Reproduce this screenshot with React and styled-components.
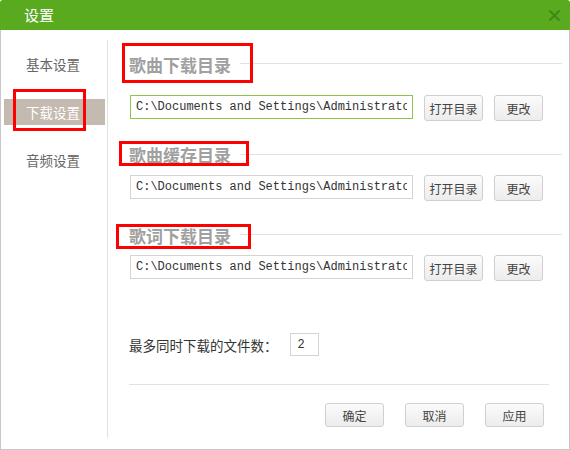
import React from "react";
import styled, { createGlobalStyle } from "styled-components";

const Global = createGlobalStyle`
  html, body { margin: 0; padding: 0; background: #ffffff; }
  body { font-family: "Noto Sans CJK SC", "Noto Sans", sans-serif; }
  * { box-sizing: border-box; }
`;

const Window = styled.div`
  width: 570px;
  height: 450px;
  display: flex;
  flex-direction: column;
  background: #ffffff;
  border-radius: 3px 3px 0 0;
  overflow: hidden;
`;

const TitleBar = styled.div`
  height: 30px;
  flex: none;
  background: #5aaa1f;
  display: flex;
  align-items: center;
  justify-content: space-between;
  padding: 0 9px 0 24px;
`;

const Title = styled.span`
  color: #ffffff;
  font-size: 15px;
  line-height: 30px;
`;

const Body = styled.div`
  flex: 1;
  display: flex;
  border: 1px solid #c8c8c8;
  border-top: none;
  padding: 10px 0 11px;
`;

const Sidebar = styled.nav`
  width: 107px;
  flex: none;
  border-right: 1px solid #e2e2e2;
  padding-top: 11px;
  display: flex;
  flex-direction: column;
  gap: 22px;
`;

const NavItem = styled.div`
  position: relative;
  height: 26px;
  margin: 0 2px 0 3px;
  display: flex;
  align-items: center;
  padding-left: 22px;
  font-size: 13.5px;
  color: ${(p) => (p.$active ? "#ffffff" : "#666666")};
  background: ${(p) => (p.$active ? "#c4bab0" : "transparent")};
`;

const RedBox = styled.div`
  position: absolute;
  top: ${(p) => p.$t}px;
  left: ${(p) => p.$l}px;
  width: ${(p) => p.$w}px;
  height: ${(p) => p.$h}px;
  border: 3px solid #ff0000;
  pointer-events: none;
`;

const Content = styled.div`
  flex: 1;
  display: flex;
  flex-direction: column;
  padding: 14px 0 0 21px;
`;

const Section = styled.section`
  margin-top: ${(p) => p.$mt}px;
  display: flex;
  flex-direction: column;
`;

const HeadingRow = styled.div`
  display: flex;
  align-items: center;
  height: 22px;
  padding-right: 7px;
`;

const HeadingText = styled.h3`
  position: relative;
  margin: 0;
  font-size: 17px;
  font-weight: bold;
  color: #a0a0a0;
  line-height: 22px;
  white-space: nowrap;
`;

const Rule = styled.div`
  flex: 1;
  height: 1px;
  margin-left: 9px;
  margin-top: ${(p) => p.$mt || 0}px;
  background: #e2e2e2;
`;

const PathRow = styled.div`
  display: flex;
  align-items: flex-start;
  gap: 11px;
  margin-top: ${(p) => p.$mt}px;
  padding-left: 1px;
`;

const PathInput = styled.input`
  width: 283px;
  height: 24px;
  margin: 0;
  padding: 0 5px;
  border: 1px solid ${(p) => (p.$focused ? "#8cc54c" : "#d4d4d4")};
  font-family: "Liberation Mono", "DejaVu Sans Mono", monospace;
  font-size: 12px;
  color: #333333;
  background: #ffffff;
  outline: none;
`;

const Button = styled.button`
  width: ${(p) => p.$w || 59}px;
  height: ${(p) => p.$h || 26}px;
  padding: 0;
  border: 1px solid #d0d0d0;
  border-radius: 3px;
  background: linear-gradient(#fbfbfb, #ececec);
  color: #444444;
  font-family: "Noto Sans CJK SC", sans-serif;
  font-size: 12px;
  display: flex;
  align-items: center;
  justify-content: center;
`;

const CountRow = styled.div`
  display: flex;
  align-items: center;
  margin-top: 52px;
  font-size: 13.5px;
  color: #333333;
`;

const CountInput = styled.input`
  width: 29px;
  height: 23px;
  margin-left: 12px;
  padding: 0 0 0 7px;
  border: 1px solid #d4d4d4;
  font-family: "Liberation Mono", monospace;
  font-size: 12px;
  color: #333333;
  outline: none;
`;

const Separator = styled.div`
  height: 1px;
  background: #e2e2e2;
  margin: 28px 20px 0 0;
`;

const Footer = styled.div`
  display: flex;
  justify-content: flex-end;
  gap: 21px;
  margin-top: 18px;
  padding-right: 25px;
`;

const CloseIcon = () => (
  <svg width="13" height="13" viewBox="0 0 13 13">
    <path d="M1.5 1.5 L11.5 11.5 M11.5 1.5 L1.5 11.5" stroke="#3f8a17" strokeWidth="2.2" />
  </svg>
);

const PATH = "C:\\Documents and Settings\\Administrator\\My Documents";

const sections = [
  { title: "歌曲下载目录", mt: 0, rowMt: 19, focused: true, box: { t: -11, l: -7, w: 131, h: 40 }, ruleMt: -4 },
  { title: "歌曲缓存目录", mt: 23, rowMt: 9, focused: false, box: { t: -3, l: -10, w: 130, h: 25 }, ruleMt: -2 },
  { title: "歌词下载目录", mt: 24, rowMt: 8, focused: false, box: { t: -1, l: -13, w: 135, h: 25 }, ruleMt: -3 },
];

export default function App() {
  return (
    <Window>
      <Global />
      <TitleBar>
        <Title>设置</Title>
        <CloseIcon />
      </TitleBar>
      <Body>
        <Sidebar>
          <NavItem>基本设置</NavItem>
          <NavItem $active>
            下载设置
            <RedBox $t={-10} $l={9} $w={73} $h={42} />
          </NavItem>
          <NavItem>音频设置</NavItem>
        </Sidebar>
        <Content>
          {sections.map((s) => (
            <Section key={s.title} $mt={s.mt}>
              <HeadingRow>
                <HeadingText>
                  {s.title}
                  <RedBox $t={s.box.t} $l={s.box.l} $w={s.box.w} $h={s.box.h} />
                </HeadingText>
                <Rule $mt={s.ruleMt} />
              </HeadingRow>
              <PathRow $mt={s.rowMt}>
                <PathInput readOnly value={PATH} $focused={s.focused} />
                <Button>打开目录</Button>
                <Button $w={49}>更改</Button>
              </PathRow>
            </Section>
          ))}
          <CountRow>
            最多同时下载的文件数：
            <CountInput readOnly value="2" />
          </CountRow>
          <Separator />
          <Footer>
            <Button $h={24}>确定</Button>
            <Button $h={24}>取消</Button>
            <Button $h={24}>应用</Button>
          </Footer>
        </Content>
      </Body>
    </Window>
  );
}
